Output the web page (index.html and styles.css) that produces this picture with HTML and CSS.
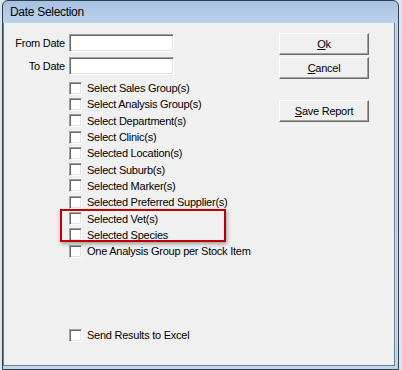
FILE: index.html
```html
<!DOCTYPE html>
<html>
<head>
<meta charset="utf-8">
<link rel="stylesheet" href="styles.css">
</head>
<body>
<div class="win">
  <div class="titlebar"><span class="title">Date Selection</span></div>
  <div class="client">
    <div class="left">
      <div class="field"><span class="label">From Date</span><span class="input"></span></div>
      <div class="field"><span class="label">To Date</span><span class="input"></span></div>
      <ul class="checks">
        <li class="check"><span class="box"></span><span class="text">Select Sales Group(s)</span></li>
        <li class="check"><span class="box"></span><span class="text">Select Analysis Group(s)</span></li>
        <li class="check"><span class="box"></span><span class="text">Select Department(s)</span></li>
        <li class="check"><span class="box"></span><span class="text">Select Clinic(s)</span></li>
        <li class="check"><span class="box"></span><span class="text">Selected Location(s)</span></li>
        <li class="check"><span class="box"></span><span class="text">Select Suburb(s)</span></li>
        <li class="check"><span class="box"></span><span class="text">Selected Marker(s)</span></li>
        <li class="check"><span class="box"></span><span class="text">Selected Preferred Supplier(s)</span></li>
        <li class="check"><span class="box"></span><span class="text">Selected Vet(s)</span></li>
        <li class="check"><span class="box"></span><span class="text">Selected Species</span></li>
        <li class="check"><span class="box"></span><span class="text">One Analysis Group per Stock Item</span></li>
      </ul>
      <div class="check excel"><span class="box"></span><span class="text">Send Results to Excel</span></div>
    </div>
    <div class="buttons">
      <button class="btn"><u>O</u>k</button>
      <button class="btn"><u>C</u>ancel</button>
      <button class="btn save"><u>S</u>ave Report</button>
    </div>
  </div>
  <div class="highlight"></div>
</div>
</body>
</html>
```

FILE: styles.css
```css
html, body {
  margin: 0;
  padding: 0;
}
body {
  width: 402px;
  height: 370px;
  overflow: hidden;
  background: #dce6f1;
  font-family: "Liberation Sans", Arial, sans-serif;
  font-size: 11px;
  letter-spacing: -0.25px;
  color: #000;
}
.win {
  position: relative;
  margin-left: 2px;
  width: 397px;
  height: 370px;
  border: 1px solid #2f3d4d;
  border-radius: 6px 6px 0 0;
  background: linear-gradient(#a6c2e2 0px, #bcd3eb 22px, #bfd5ec 100%);
  padding: 0 3px 3px 0;
  box-sizing: border-box;
  display: flex;
  flex-direction: column;
}
.titlebar {
  height: 22px;
  line-height: 22px;
  padding-left: 7px;
  flex: none;
}
.title {
  font-size: 12px;
  letter-spacing: -0.3px;
}
.client {
  flex: 1;
  background: #f0f0f0;
  border: 1px solid #6f7f90;
  border-top: none;
  display: flex;
  box-sizing: border-box;
  padding-top: 11px;
}
.left {
  width: 275px;
  display: flex;
  flex-direction: column;
}
.field {
  display: flex;
  align-items: center;
  height: 18px;
  margin-bottom: 5px;
}
.label {
  width: 61px;
  text-align: right;
  padding-right: 4px;
  box-sizing: content-box;
}
.input {
  width: 105px;
  height: 18px;
  box-sizing: border-box;
  background: #fff;
  border: 1px solid;
  border-color: #a0a0a0 #ffffff #ffffff #a0a0a0;
  box-shadow: inset 1px 1px 0 #696969, inset -1px -1px 0 #e3e3e3;
}
.checks {
  list-style: none;
  margin: 0;
  padding: 0 0 0 65px;
}
.check {
  display: flex;
  align-items: center;
  height: 16.3px;
}
.box {
  width: 13px;
  height: 13px;
  box-sizing: border-box;
  background: #fff;
  border: 1px solid;
  border-color: #a0a0a0 #ffffff #ffffff #a0a0a0;
  box-shadow: inset 1px 1px 0 #696969, inset -1px -1px 0 #e3e3e3;
  margin-right: 5px;
  flex: none;
}
.text {
  white-space: nowrap;
}
.excel {
  margin-top: 68px;
  padding-left: 65px;
}
.buttons {
  display: flex;
  flex-direction: column;
  gap: 2px;
  margin-top: -1px;
}
.btn {
  width: 90px;
  height: 22px;
  padding: 0;
  font: inherit;
  letter-spacing: inherit;
  color: #000;
  background: #f0f0f0;
  border: 1px solid;
  border-color: #ffffff #696969 #696969 #ffffff;
  box-shadow: inset -1px -1px 0 #a0a0a0, inset 1px 1px 0 #f0f0f0;
}
.btn.save {
  margin-top: 19px;
}
.highlight {
  position: absolute;
  left: 57px;
  top: 208px;
  width: 166px;
  height: 33px;
  box-sizing: border-box;
  border: 2px solid #c00000;
  box-shadow: 1px 2px 4px rgba(0, 0, 0, 0.35);
}
```
